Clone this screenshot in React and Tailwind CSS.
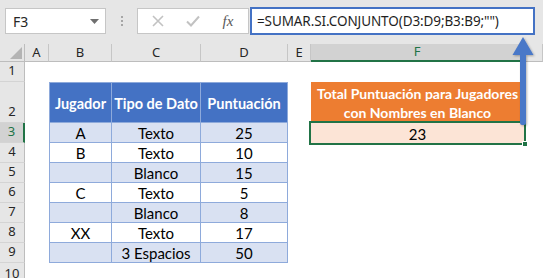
import React from "react";

const sheetFont = { fontFamily: "Lato, 'Noto Sans', sans-serif" };
const uiFont = { fontFamily: "'Noto Sans', 'Open Sans', sans-serif" };

const colHeads = ["A", "B", "C", "D", "E", "F", ""];

const rows = [
  { n: 3, b: "A", c: "Texto", d: "25", alt: true },
  { n: 4, b: "B", c: "Texto", d: "10", alt: false },
  { n: 5, b: "", c: "Blanco", d: "15", alt: true },
  { n: 6, b: "C", c: "Texto", d: "5", alt: false },
  { n: 7, b: "", c: "Blanco", d: "8", alt: true },
  { n: 8, b: "XX", c: "Texto", d: "17", alt: false },
  { n: 9, b: "", c: "3 Espacios", d: "50", alt: true },
];

function RowHead({ n, active, top }) {
  return (
    <div
      className={
        "flex justify-center text-[13px] border-b border-[#d4d4d4] " +
        (top ? "items-start pt-[1px] " : "items-end pb-[1px] ") +
        (active
          ? "bg-[#d2d2d2] text-[#217346] border-r-2 border-r-[#217346]"
          : "bg-[#e6e6e6] text-[#262626] border-r border-r-[#bdbdbd]")
      }
      style={uiFont}
    >
      {n}
    </div>
  );
}

function Empty() {
  return <div className="bg-white" />;
}

export default function App() {
  return (
    <div className="relative w-[543px] h-[278px] overflow-hidden bg-white">
      {/* Toolbar */}
      <div className="h-[44px] bg-[#e6e6e6] flex items-start pt-[8px] pl-[5px]">
        <div
          className="w-[101px] h-[26px] bg-white border border-[#c6c6c6] flex items-center justify-between pl-[7px] pr-[6px] text-[14px] text-[#262626]"
          style={uiFont}
        >
          <span>F3</span>
          <svg width="9" height="5" viewBox="0 0 9 5">
            <polygon points="0,0 9,0 4.5,5" fill="#6f6f6f" />
          </svg>
        </div>
        <div className="w-[31px] h-[26px] flex flex-col items-center justify-center gap-[2px]">
          <div className="w-[2px] h-[2px] bg-[#a6a6a6]" />
          <div className="w-[2px] h-[2px] bg-[#a6a6a6]" />
          <div className="w-[2px] h-[2px] bg-[#a6a6a6]" />
        </div>
        <div className="w-[112px] h-[26px] bg-white border border-[#c6c6c6] flex items-center">
          <div className="w-[40px] flex justify-center">
            <svg width="12" height="12" viewBox="0 0 12 12">
              <path d="M1 1 L11 11 M11 1 L1 11" stroke="#c2c2c2" strokeWidth="1.6" />
            </svg>
          </div>
          <div className="w-[30px] flex justify-center">
            <svg width="14" height="12" viewBox="0 0 14 12">
              <path d="M1 6.5 L5 10.5 L13 1.5" stroke="#c2c2c2" strokeWidth="2" fill="none" />
            </svg>
          </div>
          <div className="flex-1 flex justify-center">
            <span
              className="italic text-[15px] text-[#595959] leading-none"
              style={{ fontFamily: "'Liberation Serif', serif" }}
            >
              fx
            </span>
          </div>
        </div>
        <div
          className="ml-[1px] -mt-[1px] w-[285px] h-[28px] bg-white border-2 border-[#4472c4] flex items-center pl-[5px] text-[13.5px] tracking-[-0.1px] text-[#1f1f1f] whitespace-nowrap"
          style={uiFont}
        >
          =SUMAR.SI.CONJUNTO(D3:D9;B3:B9;"")
        </div>
      </div>

      {/* Sheet grid */}
      <div
        className="grid grid-cols-[25px_24px_63px_89px_87px_23px_213px_1fr] grid-rows-[18px_20px_41px_repeat(7,20px)_1fr] h-[234px]"
        style={sheetFont}
      >
        {/* header row */}
        <div className="bg-[#e6e6e6] border-r border-b border-[#bdbdbd] flex items-end justify-end p-[2px]">
          <svg width="12" height="12" viewBox="0 0 12 12">
            <polygon points="12,0 12,12 0,12" fill="#b4b4b4" />
          </svg>
        </div>
        {colHeads.map((h, i) =>
          h === "F" ? (
            <div
              key={i}
              className="bg-[#d2d2d2] border-r border-[#c6c6c6] border-b-2 border-b-[#217346] flex items-center justify-center text-[13px] text-[#217346]"
              style={uiFont}
            >
              {h}
            </div>
          ) : (
            <div
              key={i}
              className="bg-[#e6e6e6] border-r border-b border-r-[#c6c6c6] border-b-[#bdbdbd] flex items-center justify-center text-[13px] text-[#262626]"
              style={uiFont}
            >
              {h}
            </div>
          )
        )}

        {/* row 1 */}
        <RowHead n={1} />
        <Empty />
        <Empty />
        <Empty />
        <Empty />
        <Empty />
        <Empty />
        <Empty />

        {/* row 2 */}
        <RowHead n={2} />
        <Empty />
        <div className="bg-[#4472c4] border border-[#8eaadb] flex items-center justify-center pt-[3px] text-white font-bold text-[14.5px]">
          Jugador
        </div>
        <div className="bg-[#4472c4] border-y border-r border-[#8eaadb] flex items-center justify-center pt-[3px] text-white font-bold text-[14.5px]">
          Tipo de Dato
        </div>
        <div className="bg-[#4472c4] border-y border-r border-[#8eaadb] flex items-center justify-center pt-[3px] text-white font-bold text-[14.5px]">
          Puntuación
        </div>
        <Empty />
        <div className="bg-[#ed7d31] flex flex-col items-center justify-center text-white font-bold text-[14px] leading-[19px] pt-[1px]">
          <span>Total Puntuación para Jugadores</span>
          <span>con Nombres en Blanco</span>
        </div>
        <Empty />

        {/* data rows */}
        {rows.map((r) => (
          <React.Fragment key={r.n}>
            <RowHead n={r.n} active={r.n === 3} />
            <Empty />
            <div
              className={
                "border-x border-b border-[#8eaadb] flex items-center justify-center pt-[2px] text-[15px] text-black " +
                (r.alt ? "bg-[#d9e1f2]" : "bg-white")
              }
            >
              {r.b}
            </div>
            <div
              className={
                "border-r border-b border-[#8eaadb] flex items-center justify-center pt-[2px] text-[15px] text-black " +
                (r.alt ? "bg-[#d9e1f2]" : "bg-white")
              }
            >
              {r.c}
            </div>
            <div
              className={
                "border-r border-b border-[#8eaadb] flex items-center justify-center pt-[2px] text-[15px] text-black " +
                (r.alt ? "bg-[#d9e1f2]" : "bg-white")
              }
            >
              {r.d}
            </div>
            <Empty />
            {r.n === 3 ? (
              <div className="relative bg-[#fce4d6] outline-2 outline-[#217346] flex items-center justify-center pt-[2px] text-[15px] text-black">
                23
                <div className="absolute -right-[4px] -bottom-[4px] w-[6px] h-[6px] bg-[#217346] border border-white" />
              </div>
            ) : (
              <Empty />
            )}
            <Empty />
          </React.Fragment>
        ))}

        {/* row 10 */}
        <RowHead n={10} top />
        <Empty />
        <Empty />
        <Empty />
        <Empty />
        <Empty />
        <Empty />
        <Empty />
      </div>

      {/* Arrow overlay */}
      <svg
        className="absolute left-0 top-0 pointer-events-none"
        width="543"
        height="278"
        viewBox="0 0 543 278"
      >
        <defs>
          <filter id="sh" x="-50%" y="-50%" width="200%" height="200%">
            <feDropShadow dx="1" dy="1" stdDeviation="1" floodColor="#000" floodOpacity="0.3" />
          </filter>
        </defs>
        <g filter="url(#sh)">
          <rect x="520" y="52" width="6" height="73" rx="2" fill="#4a78c8" />
          <polygon points="512.5,55 533.5,55 523,37" fill="#4a78c8" />
        </g>
      </svg>
    </div>
  );
}
